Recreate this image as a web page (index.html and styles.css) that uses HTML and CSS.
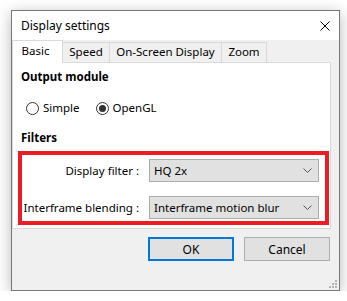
FILE: index.html
```html
<!DOCTYPE html>
<html lang="en">
<head>
    <meta charset="UTF-8">
    <title>Display settings</title>
    <link rel="stylesheet" href="styles.css">
</head>
<body>
    <div class="dialog">
        <div class="titlebar">
            <span class="title">Display settings</span>
            <svg class="close" width="10" height="10" viewBox="0 0 10 10">
                <path d="M0.5 0.5 L9.5 9.5 M9.5 0.5 L0.5 9.5" stroke="#000" stroke-width="1" fill="none"/>
            </svg>
        </div>
        <div class="content">
            <div class="tabs">
                <div class="tab active t-basic">Basic</div>
                <div class="tab t-speed">Speed</div>
                <div class="tab t-osd">On-Screen Display</div>
                <div class="tab t-zoom">Zoom</div>
            </div>
            <div class="pane">
                <div class="heading">Output module</div>
                <div class="radios">
                    <label class="radio"><span class="circle"></span>Simple</label>
                    <label class="radio"><span class="circle checked"></span>OpenGL</label>
                </div>
                <div class="heading filters">Filters</div>
                <div class="highlight">
                    <span class="lbl">Display filter :</span>
                    <div class="combo"><span>HQ 2x</span>
                        <svg width="9" height="5" viewBox="0 0 9 5"><path d="M0.5 0.5 L4.5 4.5 L8.5 0.5" stroke="#555" fill="none"/></svg>
                    </div>
                    <span class="lbl">Interframe blending :</span>
                    <div class="combo"><span>Interframe motion blur</span>
                        <svg width="9" height="5" viewBox="0 0 9 5"><path d="M0.5 0.5 L4.5 4.5 L8.5 0.5" stroke="#555" fill="none"/></svg>
                    </div>
                </div>
            </div>
            <div class="buttons">
                <button class="btn default">OK</button>
                <button class="btn">Cancel</button>
            </div>
            <svg class="grip" width="8" height="8" viewBox="0 0 8 8">
                <rect x="6" y="0" width="2" height="2" fill="#b4b4b4"/>
                <rect x="3" y="3" width="2" height="2" fill="#b4b4b4"/>
                <rect x="6" y="3" width="2" height="2" fill="#b4b4b4"/>
                <rect x="0" y="6" width="2" height="2" fill="#b4b4b4"/>
                <rect x="3" y="6" width="2" height="2" fill="#b4b4b4"/>
                <rect x="6" y="6" width="2" height="2" fill="#b4b4b4"/>
            </svg>
        </div>
    </div>
</body>
</html>
```
FILE: styles.css
```css
* {
    box-sizing: border-box;
}
body {
    margin: 0;
    padding: 10px 0 0 11px;
    background: #fff;
    font-family: "Noto Sans", "Liberation Sans", sans-serif;
    font-size: 11.5px;
    color: #000;
}
.dialog {
    width: 329px;
    height: 281px;
    border: 1px solid #777;
    background: #f0f0f0;
    box-shadow: 0 3px 14px rgba(0, 0, 0, .28);
    display: flex;
    flex-direction: column;
}
.titlebar {
    height: 29px;
    background: #fff;
    display: flex;
    align-items: center;
    justify-content: space-between;
    padding: 0 9px 0 9px;
}
.title {
    line-height: 16px;
    font-size: 12px;
}
.content {
    position: relative;
    flex: 1;
}
.tabs {
    display: flex;
    height: 22px;
    align-items: flex-end;
}
.tab {
    height: 20px;
    line-height: 18px;
    text-align: center;
    white-space: nowrap;
    border: 1px solid #d9d9d9;
    border-bottom: none;
    border-left: none;
    background: #f0f0f0;
}
.tab.active {
    height: 23px;
    margin-bottom: -1px;
    background: #fff;
    border-left: 1px solid #d9d9d9;
    padding: 1px 4px 0 0;
    position: relative;
    z-index: 1;
}
.t-basic { width: 51px; }
.t-speed { width: 47px; }
.t-osd { width: 112px; }
.t-zoom { width: 45px; }
.pane {
    width: 319px;
    height: 167px;
    background: #fff;
    border: 1px solid #d9d9d9;
    padding: 6px 0 0 8px;
}
.heading {
    font-weight: bold;
    line-height: 16px;
}
.radios {
    display: flex;
    gap: 16px;
    margin: 15px 0 0 5px;
    line-height: 16px;
}
.radio {
    display: flex;
    align-items: center;
    gap: 4px;
}
.circle {
    width: 13px;
    height: 13px;
    border: 1px solid #333;
    border-radius: 50%;
    display: flex;
    align-items: center;
    justify-content: center;
}
.circle.checked::after {
    content: "";
    width: 7px;
    height: 7px;
    border-radius: 50%;
    background: #333;
}
.filters {
    margin-top: 14px;
}
.highlight {
    width: 311px;
    height: 74px;
    margin: 5px 0 0 -3px;
    border: 4px solid #ed1c24;
    display: grid;
    grid-template-columns: 117px 170px;
    column-gap: 10px;
    row-gap: 10px;
    padding: 2px 0 0 0;
    align-items: center;
}
.lbl {
    text-align: right;
    white-space: nowrap;
}
.combo {
    height: 23px;
    background: #e1e1e1;
    border: 1px solid #adadad;
    display: flex;
    align-items: center;
    justify-content: space-between;
    padding: 0 6px 0 4px;
    white-space: nowrap;
}
.buttons {
    display: flex;
    justify-content: flex-end;
    gap: 10px;
    margin: 8px 9px 0 0;
}
.btn {
    width: 86px;
    height: 24px;
    background: #e1e1e1;
    border: 1px solid #adadad;
    font-family: inherit;
    font-size: 12px;
    color: #000;
    padding: 0;
}
.btn.default {
    border: 2px solid #0078d7;
}
.grip {
    position: absolute;
    right: 2px;
    bottom: 2px;
}
```
